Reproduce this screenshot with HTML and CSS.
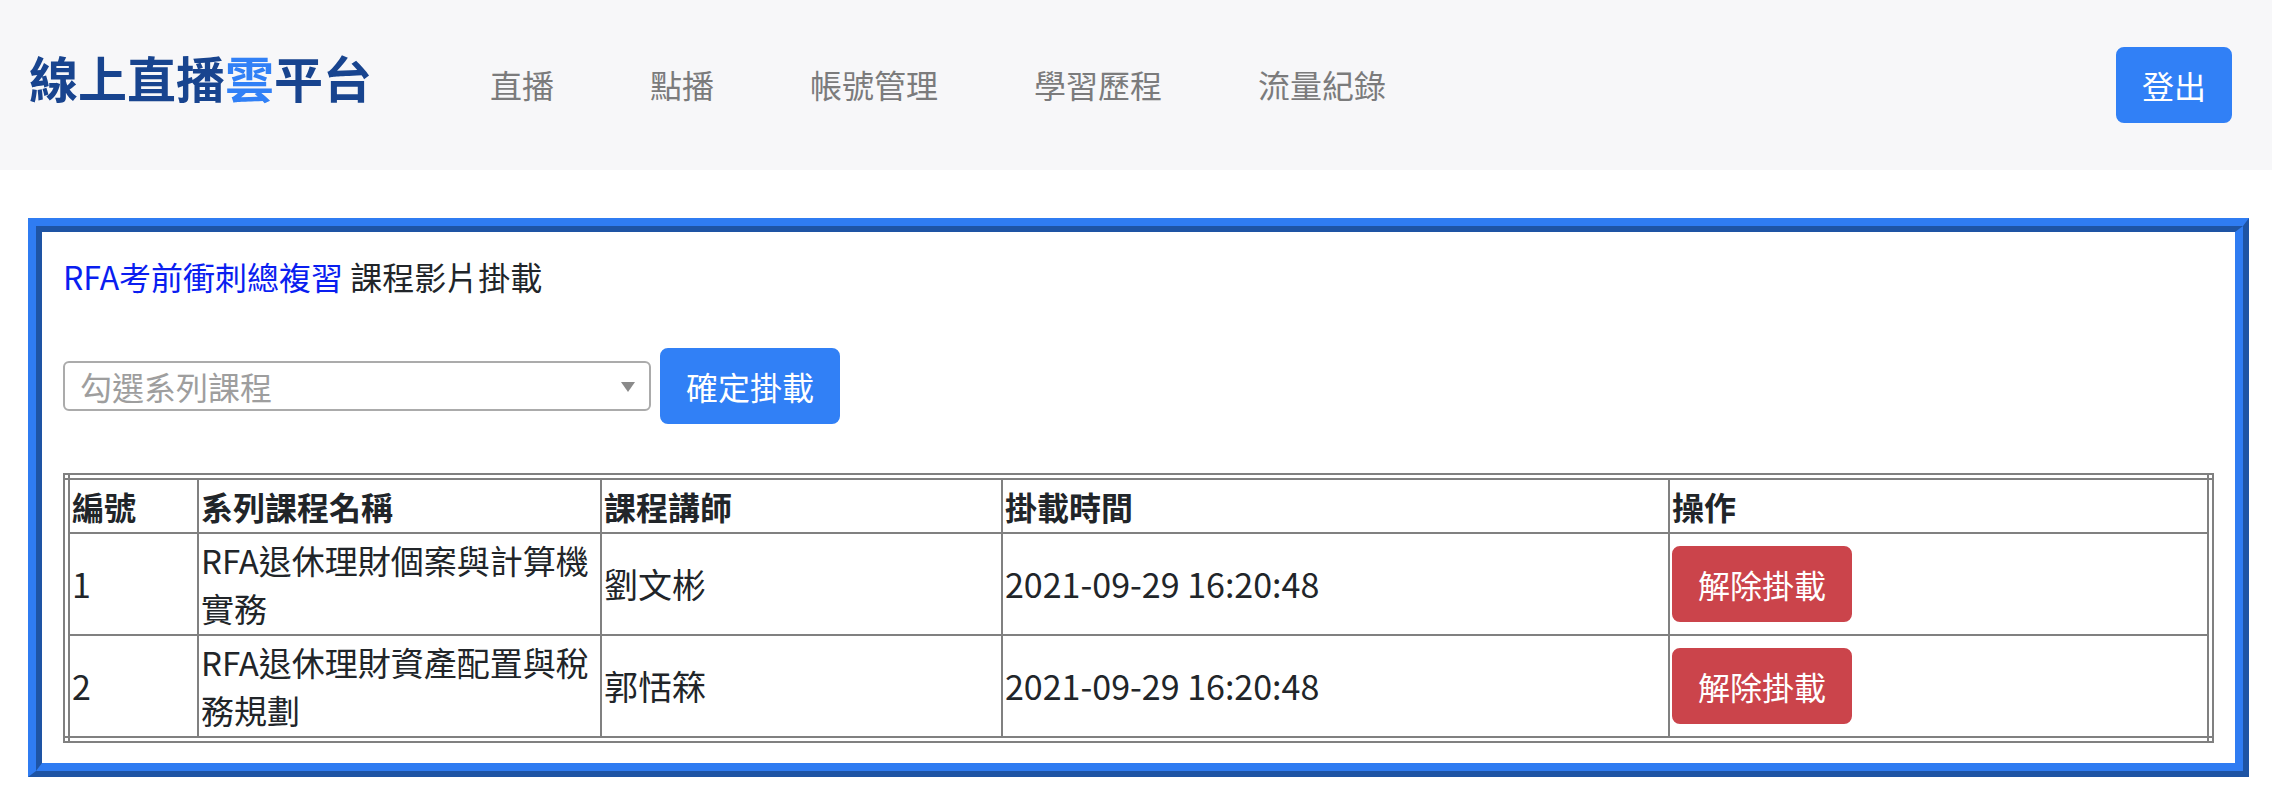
FILE: index.html
```html
<!DOCTYPE html>
<html lang="zh-Hant">
	<head>
		<meta charset="utf-8">
		<title>線上直播雲平台 - 課程影片掛載</title>
		<link rel="stylesheet" href="styles.css">
	</head>
	<body>
		<nav class="navbar">
			<div class="brand">線上直播<span class="brand-cloud">雲</span>平台</div>
			<ul class="nav-links">
				<li><a href="#">直播</a></li>
				<li><a href="#">點播</a></li>
				<li><a href="#">帳號管理</a></li>
				<li><a href="#">學習歷程</a></li>
				<li><a href="#">流量紀錄</a></li>
			</ul>
			<button class="btn btn-primary btn-logout">登出</button>
		</nav>

		<div class="panel">
			<div class="panel-inner">
				<h2 class="page-title"><a href="#">RFA考前衝刺總複習</a> 課程影片掛載</h2>

				<div class="toolbar">
					<div class="select-wrap">
						<select class="series-select">
							<option selected disabled>勾選系列課程</option>
						</select>
					</div>
					<button class="btn btn-primary">確定掛載</button>
				</div>

				<div class="table-frame">
					<table class="mount-table">
						<colgroup>
							<col class="col-no">
							<col class="col-name">
							<col class="col-teacher">
							<col class="col-time">
							<col class="col-action">
						</colgroup>
						<thead>
							<tr>
								<th>編號</th>
								<th>系列課程名稱</th>
								<th>課程講師</th>
								<th>掛載時間</th>
								<th>操作</th>
							</tr>
						</thead>
						<tbody>
							<tr>
								<td>1</td>
								<td class="cell-name">RFA退休理財個案與計算機實務</td>
								<td>劉文彬</td>
								<td>2021-09-29 16:20:48</td>
								<td><button class="btn btn-danger">解除掛載</button></td>
							</tr>
							<tr>
								<td>2</td>
								<td class="cell-name">RFA退休理財資產配置與稅務規劃</td>
								<td>郭恬箖</td>
								<td>2021-09-29 16:20:48</td>
								<td><button class="btn btn-danger">解除掛載</button></td>
							</tr>
						</tbody>
					</table>
				</div>
			</div>
		</div>
	</body>
</html>
```

FILE: styles.css
```css
/**************************************************************************/
/*
/* Default Formatting
/*
/**************************************************************************/

body {
	margin: 0;
	background-color: #ffffff;
	color: #212529;
	font-family: "Noto Sans CJK TC", "Noto Sans", sans-serif;
	font-size: 32px;
	line-height: 48px;
}

a {
	text-decoration: none;
}

.btn {
	display: inline-block;
	font-family: inherit;
	font-size: 32px;
	line-height: 48px;
	padding: 12px 24px;
	border: 2px solid transparent;
	border-radius: 8px;
	color: #ffffff;
	cursor: pointer;
}

.btn-primary {
	background-color: #3180f6;
	border-color: #3180f6;
}

.btn-danger {
	background-color: #cb444b;
	border-color: #cb444b;
}

/**************************************************************************/
/*
/* Navbar
/*
/**************************************************************************/

.navbar {
	display: flex;
	align-items: center;
	height: 170px;
	padding: 0 40px 0 29px;
	background-color: #f7f7f9;
}

.brand {
	font-size: 49px;
	line-height: 49px;
	font-weight: bold;
	color: #18448f;
	margin-bottom: 18px;
}

.brand-cloud {
	color: #3180f6;
}

.nav-links {
	display: flex;
	list-style: none;
	margin: 0 0 0 70px;
	padding: 0;
	flex: 1;
}

.nav-links a {
	display: block;
	padding: 0 48px;
	margin-bottom: 3px;
	color: #7b7b7c;
}

/**************************************************************************/
/*
/* Panel
/*
/**************************************************************************/

.panel {
	margin: 48px 23px 0 28px;
	border-style: solid;
	border-width: 8px 6px 6px 8px;
	border-color: #2f7cf2 #1e54a4 #1e54a4 #2f7cf2;
}

.panel-inner {
	border-style: solid;
	border-width: 6px 8px 8px 6px;
	border-color: #1e54a4 #2f7cf2 #2f7cf2 #1e54a4;
	padding: 20px 21px 20px 21px;
}

.page-title {
	margin: 0;
	font-size: 32px;
	line-height: 48px;
	font-weight: normal;
}

.page-title a {
	color: #0a1ef0;
}

.toolbar {
	display: flex;
	align-items: center;
	margin-top: 48px;
}

.select-wrap {
	position: relative;
}

.select-wrap::after {
	content: "";
	position: absolute;
	right: 16px;
	top: 50%;
	margin-top: -4px;
	border-left: 7px solid transparent;
	border-right: 7px solid transparent;
	border-top: 10px solid #8a8a8a;
}

.series-select {
	display: block;
	width: 588px;
	height: 50px;
	padding: 0 40px 0 15px;
	border: 2px solid #ababab;
	border-radius: 6px;
	background-color: #ffffff;
	color: #9e9e9e;
	font-family: inherit;
	font-size: 32px;
	appearance: none;
	-webkit-appearance: none;
}

.toolbar .btn {
	margin-left: 9px;
}

/**************************************************************************/
/*
/* Mount Table
/*
/**************************************************************************/

.table-frame {
	margin-top: 49px;
	border: 2px solid #808080;
	padding: 3px;
	background:
		linear-gradient(#808080, #808080) left 3px top 0 / 2px 100% no-repeat,
		linear-gradient(#808080, #808080) right 3px top 0 / 2px 100% no-repeat,
		linear-gradient(#808080, #808080) left 0 top 3px / 100% 2px no-repeat,
		linear-gradient(#808080, #808080) left 0 bottom 3px / 100% 2px no-repeat;
}

.mount-table {
	width: 100%;
	table-layout: fixed;
	border-collapse: collapse;
}

.col-no { width: 129px; }
.col-name { width: 403px; }
.col-teacher { width: 401px; }
.col-time { width: 667px; }
.col-action { width: 539px; }

.mount-table th,
.mount-table td {
	border: 2px solid #808080;
	padding: 2px;
	line-height: 48px;
	text-align: left;
	vertical-align: middle;
}

.mount-table th {
	font-size: 32px;
	font-weight: bold;
}

.mount-table td {
	font-size: 34px;
}

.mount-table td.cell-name {
	font-size: 33px;
	padding-right: 3px;
}
```
